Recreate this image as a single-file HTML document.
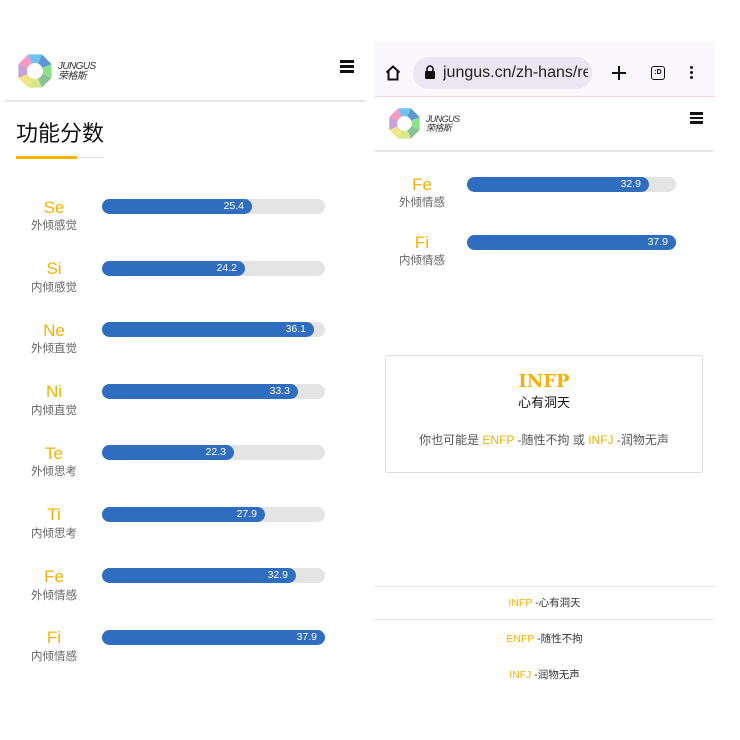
<!DOCTYPE html>
<html><head><meta charset="utf-8"><style>
*{margin:0;padding:0;box-sizing:border-box}
body{width:740px;height:740px;background:#fff;position:relative;overflow:hidden;font-family:"Liberation Sans","Noto Sans CJK SC",sans-serif}
.a{position:absolute}
.lt{position:absolute;width:60px;text-align:center;color:#f5b100;font-size:17px;line-height:18px}
.sb{position:absolute;width:60px;text-align:center;color:#666;font-size:11.5px;line-height:14px}
.tr{position:absolute;height:15px;background:#e4e4e4;border-radius:8px}
.fl{position:absolute;left:0;top:0;height:15px;background:#2f6ebf;border-radius:8px;color:#fff;font-size:10.5px;line-height:15px;text-align:right;padding-right:8px}
.y{color:#f5b100}
.hb{position:absolute;width:14px;height:2.6px;background:#111}
</style></head><body>
<!-- left panel -->
<svg class="a" style="left:17px;top:53px" width="36" height="36" viewBox="-18 -18 36 36">
<path d="M0 0L-6.9 -16.6L6.9 -16.6Z" fill="#6cc4ef"/>
<path d="M0 0L6.9 -16.6L16.6 -6.9Z" fill="#5d97d3"/>
<path d="M0 0L16.6 -6.9L16.6 6.9Z" fill="#8fe08c"/>
<path d="M0 0L16.6 6.9L6.9 16.6Z" fill="#86c294"/>
<path d="M0 0L6.9 16.6L-6.9 16.6Z" fill="#d6e889"/>
<path d="M0 0L-6.9 16.6L-16.6 6.9Z" fill="#f1e58a"/>
<path d="M0 0L-16.6 6.9L-16.6 -6.9Z" fill="#c7a2d9"/>
<path d="M0 0L-16.6 -6.9L-6.9 -16.6Z" fill="#f39bc3"/>
<circle r="8" fill="#fff"/></svg>
<div class="a" style="left:58px;top:62px;font-size:10px;font-style:italic;color:#333;line-height:10px;letter-spacing:-0.6px">JUNGUS<br>荣格斯</div>
<div class="hb" style="left:340px;top:60px"></div><div class="hb" style="left:340px;top:65px"></div><div class="hb" style="left:340px;top:70px"></div>
<div class="a" style="left:5px;top:100px;width:360px;height:2px;background:#e6e6e6"></div>
<div class="a" style="left:16px;top:120px;font-size:22px;color:#111;line-height:28px">功能分数</div>
<div class="a" style="left:16px;top:157px;width:88px;height:1px;background:#e2e2e2"></div>
<div class="a" style="left:16px;top:156px;width:61px;height:3px;background:#f5b100"></div>

<div class="lt" style="left:24px;top:199px">Se</div><div class="sb" style="left:24px;top:219px">外倾感觉</div>
<div class="tr" style="left:102px;top:199px;width:223px"><div class="fl" style="width:150px">25.4</div></div>
<div class="lt" style="left:24px;top:260px">Si</div><div class="sb" style="left:24px;top:281px">内倾感觉</div>
<div class="tr" style="left:102px;top:261px;width:223px"><div class="fl" style="width:143px">24.2</div></div>
<div class="lt" style="left:24px;top:322px">Ne</div><div class="sb" style="left:24px;top:342px">外倾直觉</div>
<div class="tr" style="left:102px;top:322px;width:223px"><div class="fl" style="width:212px">36.1</div></div>
<div class="lt" style="left:24px;top:383px">Ni</div><div class="sb" style="left:24px;top:404px">内倾直觉</div>
<div class="tr" style="left:102px;top:384px;width:223px"><div class="fl" style="width:196px">33.3</div></div>
<div class="lt" style="left:24px;top:445px">Te</div><div class="sb" style="left:24px;top:465px">外倾思考</div>
<div class="tr" style="left:102px;top:445px;width:223px"><div class="fl" style="width:132px">22.3</div></div>
<div class="lt" style="left:24px;top:506px">Ti</div><div class="sb" style="left:24px;top:527px">内倾思考</div>
<div class="tr" style="left:102px;top:507px;width:223px"><div class="fl" style="width:163px">27.9</div></div>
<div class="lt" style="left:24px;top:568px">Fe</div><div class="sb" style="left:24px;top:589px">外倾情感</div>
<div class="tr" style="left:102px;top:568px;width:223px"><div class="fl" style="width:194px">32.9</div></div>
<div class="lt" style="left:24px;top:629px">Fi</div><div class="sb" style="left:24px;top:650px">内倾情感</div>
<div class="tr" style="left:102px;top:630px;width:223px"><div class="fl" style="width:223px">37.9</div></div>

<!-- right panel -->
<div class="a" style="left:375px;top:42px;width:340px;height:54px;background:#fbf8fd"></div>
<div class="a" style="left:375px;top:96px;width:340px;height:1px;background:#f6d6de"></div>
<svg class="a" style="left:384px;top:64px" width="18" height="18" viewBox="0 0 18 18"><path d="M2.5 8.5L9 2.5L15.5 8.5M4.5 7V15.5H13.5V7" fill="none" stroke="#111" stroke-width="2"/></svg>
<div class="a" style="left:413px;top:57px;width:179px;height:32px;background:#ebe6f1;border-radius:16px"></div>
<svg class="a" style="left:424px;top:65px" width="12" height="14" viewBox="0 0 12 14"><path d="M3 6V4a3 3 0 0 1 6 0v2" fill="none" stroke="#111" stroke-width="1.6"/><rect x="1" y="6" width="10" height="8" rx="1" fill="#111"/></svg>
<div class="a" style="left:443px;top:62px;font-size:16px;color:#222;line-height:22px;white-space:nowrap;width:145px;overflow:hidden">jungus.cn/zh-hans/re</div>
<div class="a" style="left:612px;top:72px;width:14px;height:2px;background:#111"></div>
<div class="a" style="left:618px;top:66px;width:2px;height:14px;background:#111"></div>
<div class="a" style="left:651px;top:66px;width:14px;height:14px;border:1.8px solid #111;border-radius:3px;font-size:7px;font-weight:bold;text-align:center;line-height:11px">:D</div>
<div class="a" style="left:690px;top:66px;width:3px;height:3px;background:#111;border-radius:50%;box-shadow:0 5px 0 #111,0 10px 0 #111"></div>

<svg class="a" style="left:388px;top:107px" width="33" height="33" viewBox="-18 -18 36 36">
<path d="M0 0L-6.9 -16.6L6.9 -16.6Z" fill="#6cc4ef"/>
<path d="M0 0L6.9 -16.6L16.6 -6.9Z" fill="#5d97d3"/>
<path d="M0 0L16.6 -6.9L16.6 6.9Z" fill="#8fe08c"/>
<path d="M0 0L16.6 6.9L6.9 16.6Z" fill="#86c294"/>
<path d="M0 0L6.9 16.6L-6.9 16.6Z" fill="#d6e889"/>
<path d="M0 0L-6.9 16.6L-16.6 6.9Z" fill="#f1e58a"/>
<path d="M0 0L-16.6 6.9L-16.6 -6.9Z" fill="#c7a2d9"/>
<path d="M0 0L-16.6 -6.9L-6.9 -16.6Z" fill="#f39bc3"/>
<circle r="8" fill="#fff"/></svg>
<div class="a" style="left:426px;top:115px;font-size:9px;font-style:italic;color:#333;line-height:9px;letter-spacing:-0.6px">JUNGUS<br>荣格斯</div>
<div class="hb" style="left:690px;top:112px;width:13px"></div><div class="hb" style="left:690px;top:116.5px;width:13px"></div><div class="hb" style="left:690px;top:121px;width:13px"></div>
<div class="a" style="left:375px;top:150px;width:338px;height:2px;background:#e6e6e6"></div>

<div class="lt" style="left:392px;top:176px">Fe</div><div class="sb" style="left:392px;top:196px">外倾情感</div>
<div class="tr" style="left:467px;top:177px;width:209px"><div class="fl" style="width:182px">32.9</div></div>
<div class="lt" style="left:392px;top:234px">Fi</div><div class="sb" style="left:392px;top:254px">内倾情感</div>
<div class="tr" style="left:467px;top:235px;width:209px"><div class="fl" style="width:209px">37.9</div></div>

<div class="a" style="left:385px;top:355px;width:318px;height:118px;border:1px solid #dcdcdc;border-radius:3px"></div>
<div class="a" style="left:385px;top:371px;width:318px;text-align:center;font-family:'DejaVu Serif','Liberation Serif',serif;font-weight:bold;font-size:18px;color:#f5b100;line-height:22px">INFP</div>
<div class="a" style="left:385px;top:395px;width:318px;text-align:center;font-size:13px;color:#111;line-height:16px">心有洞天</div>
<div class="a" style="left:385px;top:432px;width:318px;text-align:center;font-size:12px;color:#555;line-height:16px">你也可能是 <span class="y">ENFP</span> -随性不拘 或 <span class="y">INFJ</span> -润物无声</div>

<div class="a" style="left:374px;top:586px;width:341px;height:1px;background:#e8e8e8"></div>
<div class="a" style="left:374px;top:619px;width:341px;height:1px;background:#e8e8e8"></div>
<div class="a" style="left:374px;top:596px;width:341px;text-align:center;font-size:10.5px;color:#333;line-height:14px"><span class="y">INFP</span> -心有洞天</div>
<div class="a" style="left:374px;top:632px;width:341px;text-align:center;font-size:10.5px;color:#333;line-height:14px"><span class="y">ENFP</span> -随性不拘</div>
<div class="a" style="left:374px;top:668px;width:341px;text-align:center;font-size:10.5px;color:#333;line-height:14px"><span class="y">INFJ</span> -润物无声</div>
</body></html>
